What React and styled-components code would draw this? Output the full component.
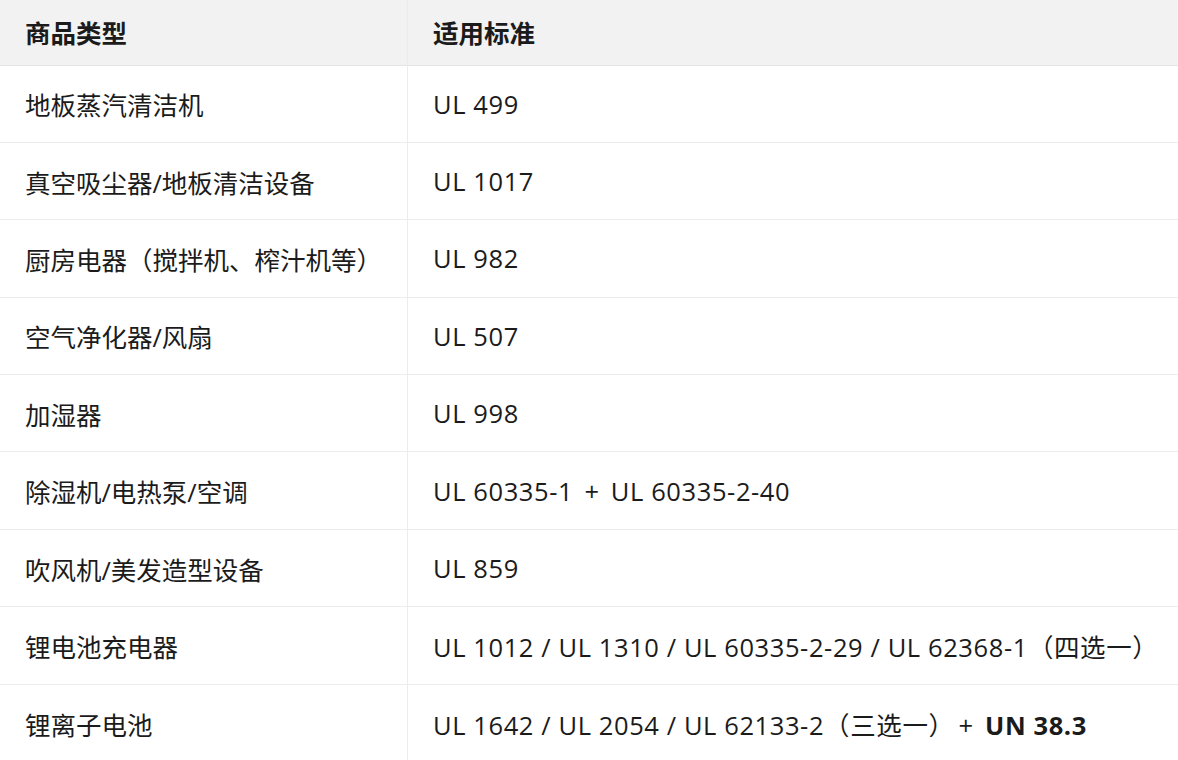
import styled, { createGlobalStyle } from 'styled-components';

const Global = createGlobalStyle`
  html, body {
    margin: 0;
    padding: 0;
    background: #fff;
  }
  body {
    font-family: "Open Sans", "Noto Sans CJK SC", sans-serif;
    color: #1b1b1b;
  }
`;

const Table = styled.table`
  width: 1178px;
  border-collapse: collapse;
  table-layout: fixed;
  font-size: 25.5px;

  th, td {
    text-align: left;
    padding: 0 0 0 25px;
    vertical-align: middle;
    white-space: nowrap;
  }

  th:first-child, td:first-child {
    width: 382px;
    border-right: 1px solid #ececec;
  }

  td:last-child {
    letter-spacing: 0.6px;
  }
`;

const HeadRow = styled.tr`
  height: 65px;
  background: #f2f2f2;
  border-bottom: 1px solid #e4e4e4;

  th {
    font-weight: 700;
    font-size: 25.5px;
    padding-bottom: 2px;
  }
`;

const Row = styled.tr`
  height: 77.4px;
  border-bottom: ${(p) => (p.$last ? 'none' : '1px solid #ececec')};
`;

const Plus = styled.span`
  margin: 0 4px;
`;

const Strong = styled.b`
  font-weight: 700;
`;

const rows = [
  ['地板蒸汽清洁机', 'UL 499'],
  ['真空吸尘器/地板清洁设备', 'UL 1017'],
  ['厨房电器（搅拌机、榨汁机等）', 'UL 982'],
  ['空气净化器/风扇', 'UL 507'],
  ['加湿器', 'UL 998'],
  [
    '除湿机/电热泵/空调',
    <>
      UL 60335-1 <Plus>+</Plus> UL 60335-2-40
    </>,
  ],
  ['吹风机/美发造型设备', 'UL 859'],
  ['锂电池充电器', 'UL 1012 / UL 1310 / UL 60335-2-29 / UL 62368-1（四选一）'],
  [
    '锂离子电池',
    <>
      UL 1642 / UL 2054 / UL 62133-2（三选一）<Plus>+</Plus> <Strong>UN 38.3</Strong>
    </>,
  ],
];

export default function App() {
  return (
    <>
      <Global />
      <Table>
        <thead>
          <HeadRow>
            <th>商品类型</th>
            <th>适用标准</th>
          </HeadRow>
        </thead>
        <tbody>
          {rows.map(([type, std], i) => (
            <Row key={i} $last={i === rows.length - 1}>
              <td>{type}</td>
              <td>{std}</td>
            </Row>
          ))}
        </tbody>
      </Table>
    </>
  );
}
